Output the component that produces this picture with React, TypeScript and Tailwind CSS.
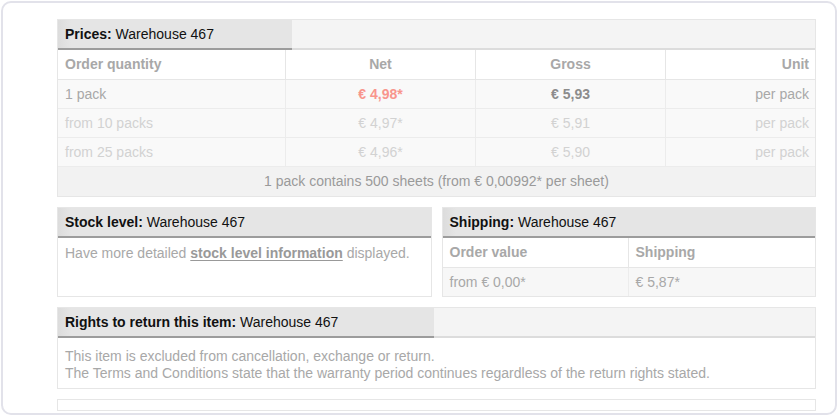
import React from 'react'

const font = { fontFamily: '"Liberation Sans", Arial, sans-serif' }

interface HeaderProps {
  label: string
  tabWidth?: string
}

function SectionHeader({ label, tabWidth }: HeaderProps) {
  return (
    <div className="flex h-[30px]">
      <div
        className={`${tabWidth ?? 'flex-1'} flex items-center border-b-2 border-[#9c9c9c] bg-[linear-gradient(90deg,#dcdcdc_0px,#e5e5e5_13px)] pl-[7px] text-[14px] text-[#111]`}
      >
        <span className="font-bold">{label}:</span>
        <span>&nbsp;Warehouse 467</span>
      </div>
      {tabWidth && <div className="flex-1 border-b-2 border-[#dcdcdc] bg-[#f4f4f4]" />}
    </div>
  )
}

const priceRows = [
  { qty: '1 pack', net: '€ 4,98*', gross: '€ 5,93', active: true },
  { qty: 'from 10 packs', net: '€ 4,97*', gross: '€ 5,91', active: false },
  { qty: 'from 25 packs', net: '€ 4,96*', gross: '€ 5,90', active: false },
]

export default function App() {
  return (
    <div className="h-[417px] w-[840px] overflow-hidden bg-white" style={font}>
      <div className="ml-[1px] mt-[1px] h-[414px] w-[836px] overflow-hidden rounded-[10px] border-2 border-[#e2e2ea] bg-white pl-[54px] pr-[19px] pt-[16px]">
        {/* Prices */}
        <div className="border border-[#e6e6e6]">
          <SectionHeader label="Prices" tabWidth="w-[234px]" />
          <div className="grid h-[30px] grid-cols-[227px_190px_190px_1fr] border-b border-[#e6e6e6] text-[14px] font-bold text-[#a8a8a8]">
            <div className="flex items-center pl-[7px]">Order quantity</div>
            <div className="flex items-center justify-center border-l border-[#e6e6e6]">Net</div>
            <div className="flex items-center justify-center border-l border-[#e6e6e6]">Gross</div>
            <div className="flex items-center justify-end border-l border-[#e6e6e6] pr-[6px]">Unit</div>
          </div>
          {priceRows.map((row) => (
            <div
              key={row.qty}
              className={`grid h-[29px] grid-cols-[227px_190px_190px_1fr] border-b border-[#ececec] bg-[#f9f9f9] text-[14px] ${row.active ? 'text-[#a8a8a8]' : 'text-[#d2d2d2]'}`}
            >
              <div className="flex items-center pl-[7px]">{row.qty}</div>
              <div className={`flex items-center justify-center border-l border-[#ececec] ${row.active ? 'font-bold text-[#f8958d]' : ''}`}>
                {row.net}
              </div>
              <div className={`flex items-center justify-center border-l border-[#ececec] ${row.active ? 'font-bold text-[#8c8c8c]' : ''}`}>
                {row.gross}
              </div>
              <div className="flex items-center justify-end border-l border-[#ececec] pr-[6px]">per pack</div>
            </div>
          ))}
          <div className="flex h-[29px] items-center justify-center bg-[#f2f2f2] text-[14px] text-[#9a9a9a]">
            1 pack contains 500 sheets (from € 0,00992* per sheet)
          </div>
        </div>

        {/* Stock level + Shipping */}
        <div className="mt-[10px] grid grid-cols-2 gap-[10px]">
          <div className="border border-[#e6e6e6]">
            <SectionHeader label="Stock level" />
            <div className="px-[7px] pt-[7px] text-[14px] leading-[17px] text-[#a8a8a8]">
              Have more detailed{' '}
              <span className="font-bold text-[#999] underline underline-offset-2">stock level information</span>{' '}
              displayed.
            </div>
          </div>
          <div className="border border-[#e6e6e6]">
            <SectionHeader label="Shipping" />
            <div className="grid h-[30px] grid-cols-[185px_1fr] border-b border-[#e6e6e6] text-[14px] font-bold text-[#a8a8a8]">
              <div className="flex items-center pl-[7px]">Order value</div>
              <div className="flex items-center border-l border-[#e6e6e6] pl-[7px]">Shipping</div>
            </div>
            <div className="grid h-[28px] grid-cols-[185px_1fr] bg-[#f7f7f7] text-[14px] text-[#a8a8a8]">
              <div className="flex items-center pl-[7px]">from € 0,00*</div>
              <div className="flex items-center border-l border-[#ececec] pl-[7px]">€ 5,87*</div>
            </div>
          </div>
        </div>

        {/* Rights to return */}
        <div className="mt-[10px] h-[82px] border border-[#e6e6e6]">
          <SectionHeader label="Rights to return this item" tabWidth="w-[376px]" />
          <div className="px-[7px] pt-[10px] text-[14px] leading-[17px] text-[#a8a8a8]">
            <p>This item is excluded from cancellation, exchange or return.</p>
            <p>The Terms and Conditions state that the warranty period continues regardless of the return rights stated.</p>
          </div>
        </div>

        <div className="mt-[10px] h-[12px] border border-[#e6e6e6]" />
      </div>
    </div>
  )
}
